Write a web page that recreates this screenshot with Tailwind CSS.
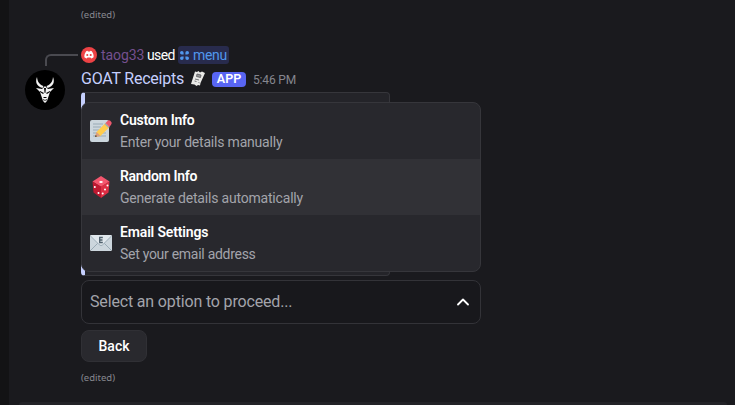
<!DOCTYPE html>
<html lang="en"><head><meta charset="utf-8"><title>GOAT Receipts</title>
<script src="https://cdn.jsdelivr.net/npm/@tailwindcss/browser@4"></script></head>
<body class="flex h-[405px] w-[735px] overflow-hidden bg-[#1a1a1e] font-['Roboto',sans-serif] whitespace-nowrap text-white">
<aside class="w-[9px] shrink-0 bg-[#131315]"></aside>
<main class="flex grow flex-col">
  <div class="h-[46px] shrink-0 pt-[8px] pl-[72px] font-['Noto_Sans',sans-serif] text-[9.5px] leading-[14px] text-[#87888f]"><span>(edited)</span></div>
  <div class="flex h-[18px] shrink-0 items-center pl-9 text-[14px] leading-[18px]">
    <div class="mt-[10px] h-[12px] w-[33px] rounded-tl-[6px] border-t-2 border-l-2 border-[#4a4a50]"></div>
    <svg class="ml-[3px] size-4" viewBox="0 0 16 16"><circle cx="8" cy="8" r="8" fill="#ed4245"/><path d="M5.200 4.200 6.500 3.800l.5.7h2l.5-.7 1.300.4c1.400 1.800 2 3.800 1.800 6-.8.7-1.600 1.100-2.400 1.300l-.7-1.100H6.500l-.7 1.100C5 11.300 4.200 10.900 3.400 10.200c-.2-2.200.4-4.200 1.800-6Z" fill="#fff"/><circle cx="6.300" cy="8" r="1.050" fill="#ed4245"/><circle cx="9.700" cy="8" r="1.050" fill="#ed4245"/></svg>
    <span class="ml-1 w-[43px] tracking-[-0.1px] text-[#75508f]">taog33</span><span class="ml-[3px] w-[28px] tracking-[-0.6px]">used</span>
    <div class="ml-[3px] flex h-[18px] w-[51px] items-center rounded-[3px] bg-[#282b4d] pl-[2px] text-[#5197ed]"><svg class="mr-1 size-[9px]" viewBox="0 0 10 10" fill="currentColor"><path d="M0 2a2 2 0 0 1 4 0v2H2a2 2 0 0 1-2-2ZM6 2a2 2 0 1 1 2 2H6ZM0 8a2 2 0 0 1 2-2h2v2a2 2 0 0 1-4 0ZM6 6h2a2 2 0 1 1-2 2Z"/></svg><span class="tracking-[-0.3px]">menu</span></div>
  </div>
  <div class="flex grow pl-4">
    <svg class="mt-[6px] size-10 shrink-0" viewBox="0 0 40 40"><circle cx="20" cy="20" r="20" fill="#000"/><g fill="#f4f4f4"><path d="M12 7c-2 5-.5 9 5.500 11l1-2c-4-1.500-6-4-6.500-9ZM28 7c2 5 .5 9-5.500 11l-1-2c4-1.500 6-4 6.500-9Z"/><path d="m11 18 6 1 3-3 3 3 6-1-4 4-1 3-1 3-1 3-2 2-2-2-1-3-1-3-1-3Z"/></g><path d="m15 21 4 2-1 1-3-2ZM25 21l-4 2 1 1 3-2ZM18 27h4l-1 1h-2ZM19 18h2l-.6 5h-.8ZM18 29l2 1 2-1-.5 1.500h-3Z" fill="#000"/></svg>
    <div class="ml-4 grow">
      <div class="flex h-[28px] items-center pt-[2px]">
        <span class="w-[103px] text-[16px] leading-5 tracking-[-0.22px] text-[#c5cffd]">GOAT Receipts</span>
        <svg class="ml-[6px] size-[16px]" viewBox="0 0 16 16"><path d="m5 .5 2 .6 1.400-1 1.600 1.400 2-1 3 1.500-4.500 10-.5 2.500-2-.5-1.500 1-2-1.500L1 13Z" fill="#e9e9e7"/><path d="m7 3 4 1-.5 2.500-4-1ZM5 8l4 1M4.500 10l2 .5M8.500 11.500l1 .3" stroke="#55565b" stroke-width=".8" fill="#999"/></svg>
        <div class="ml-[6px] flex h-[15px] w-[34px] items-center justify-center rounded-[4px] bg-[#5865f2] text-[12.5px] font-semibold"><span>APP</span></div>
        <span class="ml-[7px] pt-px text-[12px] tracking-[-0.15px] text-[#85868e]">5:46 PM</span>
      </div>
      <div class="relative h-[184px]">
        <div class="h-[184px] w-[309px] rounded-[4px] border border-l-4 border-[#36363b] border-l-[#c5cffd] bg-[#242429]"></div>
        <div class="absolute top-[10px] left-0 h-[170px] w-[400px] overflow-hidden rounded-lg border border-[#36363b] bg-[#28282d] text-[14px] leading-[18px]">
          <div class="flex h-[56px] items-center pl-2"><svg class="size-[22px]" viewBox="0 0 22 22"><rect y="0" width="19" height="22" rx="2" fill="#ccd6dd"/><path d="M3 4h10M3 7h8M3 10h6M3 13h13M3 16h13" stroke="#99aab5"/><path d="m5 17 1.500-5 9-9 4 4-9 9Z" fill="#ffcc4d"/><path d="m5 17 1.500-5 4 4Z" fill="#d99e82"/><path d="m5 17 .7-2 1.300 1.300Z" fill="#292f33"/><path d="m14.500 4 1-1 4 4-1 1Z" fill="#99aab5"/><path d="M15.500 3 18 .5q1-.5 2 0l1.500 1.800q.5 1-.2 2L19.500 7Z" fill="#ea596e"/></svg><div class="ml-2 flex flex-col gap-1"><span class="font-semibold tracking-[-0.23px]">Custom Info</span><span class="tracking-[-0.2px] text-[#a3a4ab]">Enter your details manually</span></div></div>
          <div class="flex h-[56px] items-center bg-[#313136] pl-2"><svg class="size-[22px]" viewBox="0 0 22 22"><path d="m11 0 8.500 5.500L11 11 2.500 5.500Z" fill="#f4566e"/><path d="M2.500 5.500 11 10.500V22l-7.500-5.500Z" fill="#be1931"/><path d="M19.500 5.500 11 10.500V22l7.500-5.500Z" fill="#dd2e44"/><g fill="#fff"><ellipse cx="11" cy="6" rx="1.800" ry="1.100"/><circle cx="4.800" cy="11" r="1"/><circle cx="8.500" cy="17" r="1"/><circle cx="17.500" cy="9.500" r="1"/><circle cx="15" cy="13.500" r="1"/><circle cx="12.700" cy="17.500" r="1"/></g></svg><div class="ml-2 flex flex-col gap-1"><span class="font-semibold tracking-[-0.3px]">Random Info</span><span class="tracking-[-0.19px] text-[#a3a4ab]">Generate details automatically</span></div></div>
          <div class="flex h-[56px] items-center pl-2"><svg class="size-[22px]" viewBox="0 0 22 22"><rect y="3" width="22" height="16" rx="1.500" fill="#ccd6dd"/><path d="m1 18 7-7m13 7-7-7" stroke="#99aab5"/><path d="M0 4q.5-1 2-1h18q1.500 0 2 1l-9.300 9q-1.700 1.500-3.400 0Z" fill="#e1e8ed"/><path d="m.5 4 8.800 8.800q1.700 1.500 3.400 0L21.500 4" stroke="#99aab5" fill="none"/><path d="M12.800 5.500H9.700v5h3.100M9.700 8h2.800" stroke="#50616d" stroke-width="1.300" fill="none"/></svg><div class="ml-2 flex flex-col gap-1"><span class="font-semibold tracking-[-0.15px]">Email Settings</span><span class="tracking-[-0.28px] text-[#a3a4ab]">Set your email address</span></div></div>
        </div>
      </div>
      <div class="mt-1 flex h-[44px] w-[400px] items-center justify-between rounded-lg border border-[#333338] bg-[#18181c] pr-[11px] pl-2"><span class="text-[16px] tracking-[-0.16px] text-[#a3a4ab]">Select an option to proceed...</span><svg class="size-3" viewBox="0 0 12 12"><path d="m1 8.500 5-5 5 5" fill="none" stroke="#fff" stroke-width="1.800" stroke-linecap="round" stroke-linejoin="round"/></svg></div>
      <div class="mt-[6px] flex h-8 w-[66px] items-center justify-center rounded-lg border border-[#303035] bg-[#29292e] text-[14px] font-medium"><span>Back</span></div>
      <div class="mt-[9px] font-['Noto_Sans',sans-serif] text-[9.5px] leading-[14px] text-[#87888f]"><span>(edited)</span></div>
    </div>
  </div>
  <div class="mr-2 ml-[10px] h-[3px] shrink-0 rounded-t-lg bg-[#222227]"></div>
</main>
</body></html>
